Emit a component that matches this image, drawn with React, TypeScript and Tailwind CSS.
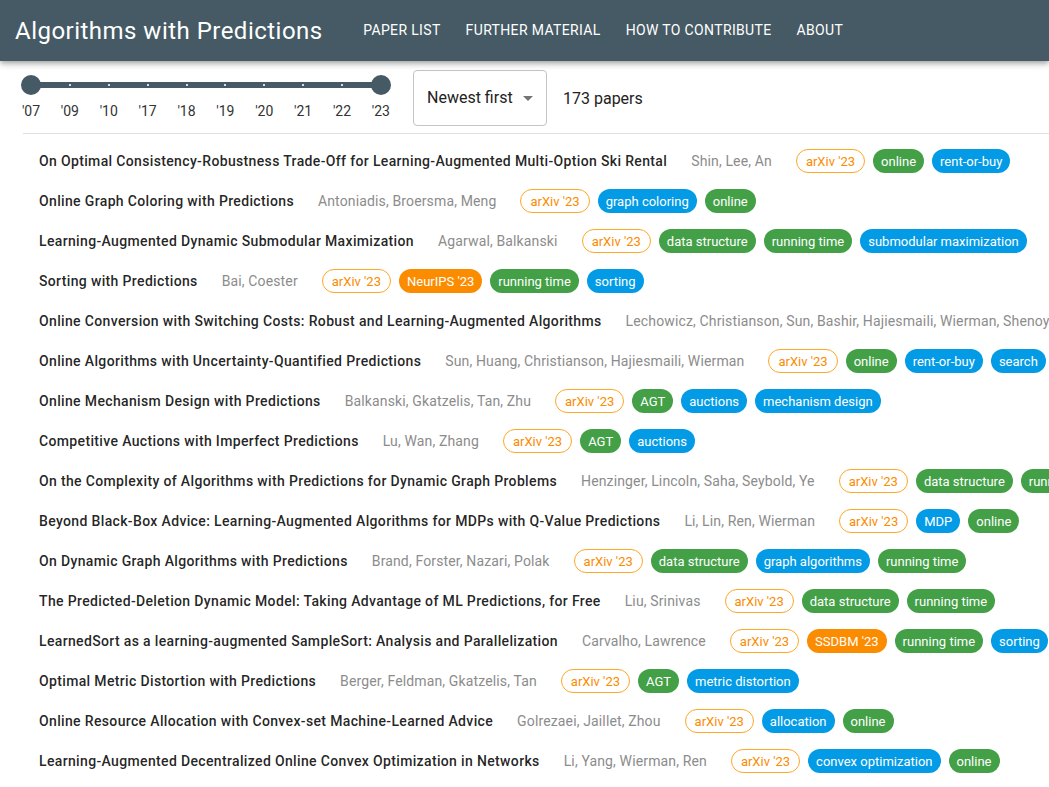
import React from "react";

type Tag = { label: string; kind: "venue" | "conf" | "green" | "blue" };

const v = (label: string): Tag => ({ label, kind: "venue" });
const c = (label: string): Tag => ({ label, kind: "conf" });
const g = (label: string): Tag => ({ label, kind: "green" });
const b = (label: string): Tag => ({ label, kind: "blue" });

const papers: { title: string; authors: string; tags: Tag[] }[] = [
  {
    title: "On Optimal Consistency-Robustness Trade-Off for Learning-Augmented Multi-Option Ski Rental",
    authors: "Shin, Lee, An",
    tags: [v("arXiv '23"), g("online"), b("rent-or-buy")],
  },
  {
    title: "Online Graph Coloring with Predictions",
    authors: "Antoniadis, Broersma, Meng",
    tags: [v("arXiv '23"), b("graph coloring"), g("online")],
  },
  {
    title: "Learning-Augmented Dynamic Submodular Maximization",
    authors: "Agarwal, Balkanski",
    tags: [v("arXiv '23"), g("data structure"), g("running time"), b("submodular maximization")],
  },
  {
    title: "Sorting with Predictions",
    authors: "Bai, Coester",
    tags: [v("arXiv '23"), c("NeurIPS '23"), g("running time"), b("sorting")],
  },
  {
    title: "Online Conversion with Switching Costs: Robust and Learning-Augmented Algorithms",
    authors: "Lechowicz, Christianson, Sun, Bashir, Hajiesmaili, Wierman, Shenoy",
    tags: [v("arXiv '23"), g("online"), b("conversion")],
  },
  {
    title: "Online Algorithms with Uncertainty-Quantified Predictions",
    authors: "Sun, Huang, Christianson, Hajiesmaili, Wierman",
    tags: [v("arXiv '23"), g("online"), b("rent-or-buy"), b("search")],
  },
  {
    title: "Online Mechanism Design with Predictions",
    authors: "Balkanski, Gkatzelis, Tan, Zhu",
    tags: [v("arXiv '23"), g("AGT"), b("auctions"), b("mechanism design")],
  },
  {
    title: "Competitive Auctions with Imperfect Predictions",
    authors: "Lu, Wan, Zhang",
    tags: [v("arXiv '23"), g("AGT"), b("auctions")],
  },
  {
    title: "On the Complexity of Algorithms with Predictions for Dynamic Graph Problems",
    authors: "Henzinger, Lincoln, Saha, Seybold, Ye",
    tags: [v("arXiv '23"), g("data structure"), g("running time")],
  },
  {
    title: "Beyond Black-Box Advice: Learning-Augmented Algorithms for MDPs with Q-Value Predictions",
    authors: "Li, Lin, Ren, Wierman",
    tags: [v("arXiv '23"), b("MDP"), g("online")],
  },
  {
    title: "On Dynamic Graph Algorithms with Predictions",
    authors: "Brand, Forster, Nazari, Polak",
    tags: [v("arXiv '23"), g("data structure"), b("graph algorithms"), g("running time")],
  },
  {
    title: "The Predicted-Deletion Dynamic Model: Taking Advantage of ML Predictions, for Free",
    authors: "Liu, Srinivas",
    tags: [v("arXiv '23"), g("data structure"), g("running time")],
  },
  {
    title: "LearnedSort as a learning-augmented SampleSort: Analysis and Parallelization",
    authors: "Carvalho, Lawrence",
    tags: [v("arXiv '23"), c("SSDBM '23"), g("running time"), b("sorting")],
  },
  {
    title: "Optimal Metric Distortion with Predictions",
    authors: "Berger, Feldman, Gkatzelis, Tan",
    tags: [v("arXiv '23"), g("AGT"), b("metric distortion")],
  },
  {
    title: "Online Resource Allocation with Convex-set Machine-Learned Advice",
    authors: "Golrezaei, Jaillet, Zhou",
    tags: [v("arXiv '23"), b("allocation"), g("online")],
  },
  {
    title: "Learning-Augmented Decentralized Online Convex Optimization in Networks",
    authors: "Li, Yang, Wierman, Ren",
    tags: [v("arXiv '23"), b("convex optimization"), g("online")],
  },
  {
    title: "Learning-Augmented Online Algorithms for the Multi-Level Aggregation Problem",
    authors: "Bienkowski, Ditrich, Mucha",
    tags: [v("arXiv '23"), g("online")],
  },
];

const years = ["'07", "'09", "'10", "'17", "'18", "'19", "'20", "'21", "'22", "'23"];
const nav = ["Paper list", "Further material", "How to contribute", "About"];

const chipClass: Record<Tag["kind"], string> = {
  venue: "border border-[#ffa726] text-[#fb8c00] bg-white px-[9px]",
  conf: "bg-[#fb8c00] text-white px-2",
  green: "bg-[#43a047] text-white px-2",
  blue: "bg-[#039be5] text-white px-2",
};

function Chip({ tag }: { tag: Tag }) {
  return (
    <span
      className={`inline-flex h-6 shrink-0 items-center rounded-full text-[13px] leading-none ${chipClass[tag.kind]}`}
    >
      {tag.label}
    </span>
  );
}

function YearSlider() {
  return (
    <div className="relative mt-[5px] w-[370px] shrink-0 px-[10px]">
      <div className="relative h-5">
        <div className="absolute left-0 right-0 top-[7px] h-[6px] bg-[#455a64]" />
        <div className="absolute left-[-19.44px] top-[9px] flex">
          {years.map((y, i) => (
            <div key={y} className="flex w-[38.89px] shrink-0 justify-center">
              {i > 0 && i < years.length - 1 ? (
                <span className="h-[2px] w-[2px] bg-white/80" />
              ) : null}
            </div>
          ))}
        </div>
        <span className="absolute left-[-10px] top-0 h-5 w-5 rounded-full bg-[#455a64]" />
        <span className="absolute right-[-10px] top-0 h-5 w-5 rounded-full bg-[#455a64]" />
      </div>
      <div className="ml-[-19.44px] mt-[6px] flex w-[389px] text-[14px] text-[#333]">
        {years.map((y) => (
          <span key={y} className="w-[38.89px] shrink-0 text-center">
            {y}
          </span>
        ))}
      </div>
    </div>
  );
}

export default function App() {
  return (
    <div className="min-h-screen w-full overflow-hidden bg-white font-['Roboto',sans-serif]">
      <header className="relative z-10 flex h-[61px] items-center bg-[#455a64] pl-[15px] shadow-[0_2px_4px_-1px_rgba(0,0,0,0.2),0_4px_5px_0_rgba(0,0,0,0.14),0_1px_10px_0_rgba(0,0,0,0.12)]">
        <h1 className="whitespace-nowrap text-[24px] font-normal tracking-[0.02em] text-white">
          Algorithms with Predictions
        </h1>
        <nav className="ml-[28px] flex whitespace-nowrap">
          {nav.map((n) => (
            <a
              key={n}
              className="px-[12.5px] text-[14px] font-normal uppercase tracking-[0.025em] text-white"
            >
              {n}
            </a>
          ))}
        </nav>
      </header>

      <main className="pl-[21px]">
        <div className="flex items-start pt-[9px]">
          <YearSlider />
          <div className="ml-[22px] flex h-14 w-[134px] shrink-0 items-center justify-between rounded border border-[#c4c4c4] pl-[13px] pr-[13px]">
            <span className="text-[16px] text-[#222]">Newest first</span>
            <svg width="10" height="5" viewBox="0 0 10 5" className="mt-[1px]">
              <path d="M0 0 L10 0 L5 5 Z" fill="#757575" />
            </svg>
          </div>
          <span className="ml-4 mt-[17px] whitespace-nowrap text-[16px] text-[#222]">173 papers</span>
        </div>

        <div className="ml-[2px] mt-[7px] h-px bg-[#e0e0e0]" />

        <ul className="pt-[7px]">
          {papers.map((p) => (
            <li
              key={p.title}
              className="flex h-10 items-center gap-6 whitespace-nowrap pl-[18px] text-[14px]"
            >
              <span className="font-medium tracking-[0.025em] text-[rgba(0,0,0,0.87)]">{p.title}</span>
              <span className="tracking-[0.01em] text-[#8c8c8c]">{p.authors}</span>
              <span className="flex gap-2">
                {p.tags.map((t) => (
                  <Chip key={t.label} tag={t} />
                ))}
              </span>
            </li>
          ))}
        </ul>
      </main>
    </div>
  );
}
